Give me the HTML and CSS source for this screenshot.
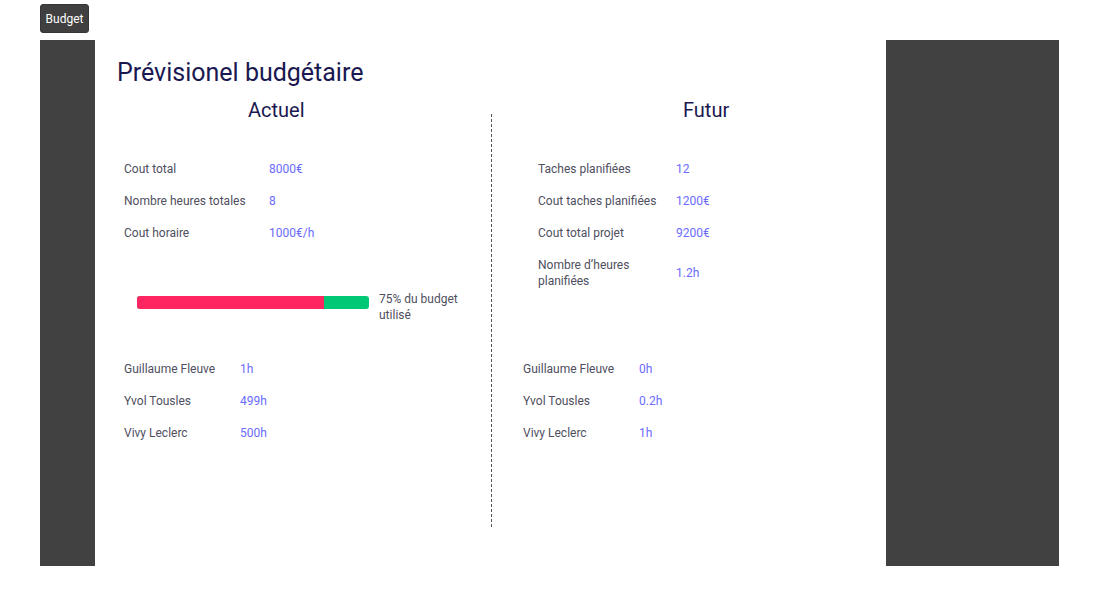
FILE: index.html
```html
<!DOCTYPE html>
<html lang="fr">
<head>
<meta charset="utf-8">
<title>Budget</title>
<link rel="stylesheet" href="styles.css">
</head>
<body>
<div class="topbar"><button class="btn">Budget</button></div>
<div class="frame">
  <div class="side side-left"></div>
  <main class="content">
    <h1 class="title">Prévisionel budgétaire</h1>
    <div class="cols">
      <section class="col col-left">
        <h2 class="col-title">Actuel</h2>
        <div class="stats">
          <div class="row"><span class="label">Cout total</span><span class="value">8000€</span></div>
          <div class="row"><span class="label">Nombre heures totales</span><span class="value">8</span></div>
          <div class="row"><span class="label">Cout horaire</span><span class="value">1000€/h</span></div>
        </div>
        <div class="progress">
          <div class="bar"><div class="bar-fill" style="width:187px"></div></div>
          <div class="bar-text">75% du budget utilisé</div>
        </div>
        <div class="people">
          <div class="row"><span class="label">Guillaume Fleuve</span><span class="value">1h</span></div>
          <div class="row"><span class="label">Yvol Tousles</span><span class="value">499h</span></div>
          <div class="row"><span class="label">Vivy Leclerc</span><span class="value">500h</span></div>
        </div>
      </section>
      <div class="divider"></div>
      <section class="col col-right">
        <h2 class="col-title">Futur</h2>
        <div class="stats">
          <div class="row"><span class="label">Taches planifiées</span><span class="value">12</span></div>
          <div class="row"><span class="label">Cout taches planifiées</span><span class="value">1200€</span></div>
          <div class="row"><span class="label">Cout total projet</span><span class="value">9200€</span></div>
          <div class="row"><span class="label">Nombre d’heures planifiées</span><span class="value">1.2h</span></div>
        </div>
        <div class="people">
          <div class="row"><span class="label">Guillaume Fleuve</span><span class="value">0h</span></div>
          <div class="row"><span class="label">Yvol Tousles</span><span class="value">0.2h</span></div>
          <div class="row"><span class="label">Vivy Leclerc</span><span class="value">1h</span></div>
        </div>
      </section>
    </div>
  </main>
  <div class="side side-right"></div>
</div>
</body>
</html>
```
FILE: styles.css
```css
* { box-sizing: border-box; }
html, body { margin: 0; padding: 0; background: #ffffff; }
body {
  font-family: Roboto, "Noto Sans", "Liberation Sans", sans-serif;
  color: #4f4f60;
}
.topbar { padding: 4px 40px 0; height: 40px; }
.btn {
  display: block;
  width: 49px;
  height: 29px;
  padding: 0;
  border: 1px solid #363636;
  border-radius: 3px;
  background: #404040;
  color: #ffffff;
  font-family: Roboto, "Noto Sans", sans-serif;
  font-size: 12px;
}
.frame {
  display: flex;
  margin: 0 40px;
  height: 526px;
  width: 1019px;
}
.side { background: #414141; }
.side-left { width: 55px; }
.side-right { width: 173px; }
.content {
  flex: 1;
  display: flex;
  flex-direction: column;
  padding: 18px 0 0 22px;
}
.title {
  margin: 0;
  font-size: 25px;
  line-height: 29px;
  font-weight: 400;
  color: #1a1850;
}
.cols { display: flex; margin-top: 11px; }
.col-left { width: 374px; }
.col-right { flex: 1; }
.col-title {
  margin: 0;
  font-size: 20px;
  line-height: 24px;
  font-weight: 400;
  color: #1a1850;
}
.col-left .col-title { padding-left: 131px; }
.col-right .col-title { padding-left: 191px; }
.divider {
  width: 0;
  height: 413px;
  margin-top: 16px;
  border-left: 1px dashed #555555;
}
.stats { margin-top: 31px; }
.row {
  display: flex;
  align-items: center;
  padding: 8px 0;
  font-size: 12px;
  line-height: 16px;
}
.label { color: #4f4f60; }
.value { color: #6b6bff; }
.col-left .stats { padding-left: 7px; }
.col-left .stats .label { width: 145px; }
.col-right .stats { padding-left: 46px; }
.col-right .stats .label { width: 125px; margin-right: 13px; }
.progress {
  display: flex;
  align-items: flex-start;
  margin-top: 42px;
  padding-left: 20px;
  font-size: 12px;
  line-height: 16px;
}
.bar {
  width: 232px;
  height: 13px;
  margin-top: 5px;
  border-radius: 3px;
  background: #00c875;
  overflow: hidden;
  display: flex;
}
.bar-fill { height: 100%; background: #ff2560; }
.bar-text { width: 90px; margin-left: 10px; color: #4f4f60; }
.people { margin-top: 30px; }
.col-left .people { padding-left: 7px; }
.col-right .people { margin-top: 56px; padding-left: 31px; }
.people .label { width: 116px; }
```
